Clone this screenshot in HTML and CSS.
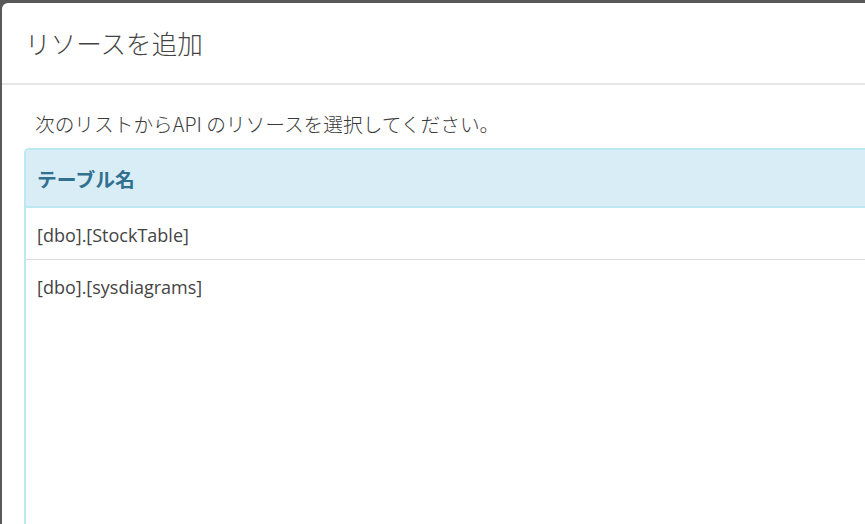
FILE: index.html
```html
<!DOCTYPE html>
<html lang="ja">
<head>
<meta charset="utf-8">
<title>リソースを追加</title>
<link rel="stylesheet" href="styles.css">
</head>
<body>
<div class="modal">
  <div class="modal-header">
    <h4 class="modal-title">リソースを追加</h4>
  </div>
  <div class="modal-body">
    <p class="hint">次のリストからAPI のリソースを選択してください。</p>
    <div class="panel">
      <div class="panel-heading">テーブル名</div>
      <div class="list">
        <div class="row">[dbo].[StockTable]</div>
        <div class="row last">[dbo].[sysdiagrams]</div>
      </div>
    </div>
  </div>
</div>
</body>
</html>
```
FILE: styles.css
```css
html, body {
  margin: 0;
  height: 100%;
  overflow: hidden;
}
body {
  background: #595959;
  font-family: "Open Sans", "Noto Sans CJK JP", sans-serif;
  color: #333;
}
.modal {
  margin: 3px 0 0 2px;
  height: calc(100% - 3px);
  background: #fff;
  border-top-left-radius: 6px;
  display: flex;
  flex-direction: column;
}
.modal-header {
  height: 80px;
  border-bottom: 2px solid #e5e5e5;
  display: flex;
  align-items: center;
  padding-left: 23px;
  flex-shrink: 0;
}
.modal-title {
  margin: 0;
  font-family: "Noto Sans CJK JP", sans-serif;
  font-weight: 300;
  font-size: 25.6px;
  color: #444;
  line-height: 1;
  padding-bottom: 1px;
}
.modal-body {
  flex: 1;
  padding: 0 0 0 22px;
  display: flex;
  flex-direction: column;
}
.hint {
  margin: 27px 0 0 11px;
  font-family: "Noto Sans CJK JP", sans-serif;
  font-size: 19.7px;
  line-height: 24px;
  color: #3a3a3a;
  font-weight: 300;
  height: 36px;
}
.panel {
  flex: 1;
  border: 2px solid #bce8f1;
  border-right: none;
  border-bottom: none;
  border-top-left-radius: 5px;
}
.panel-heading {
  height: 56px;
  background: #d9edf7;
  border-bottom: 2px solid #bce8f1;
  border-top-left-radius: 3px;
  color: #31708f;
  font-family: "Noto Sans CJK JP", sans-serif;
  font-weight: 700;
  font-size: 19.8px;
  display: flex;
  align-items: center;
  padding-left: 11px;
}
.row {
  height: 52px;
  box-sizing: border-box;
  border-bottom: 1px solid #ddd;
  display: flex;
  align-items: center;
  padding-left: 11px;
  padding-top: 2px;
  font-size: 18px;
  color: #444;
}
.row.last {
  border-bottom: none;
}
```
